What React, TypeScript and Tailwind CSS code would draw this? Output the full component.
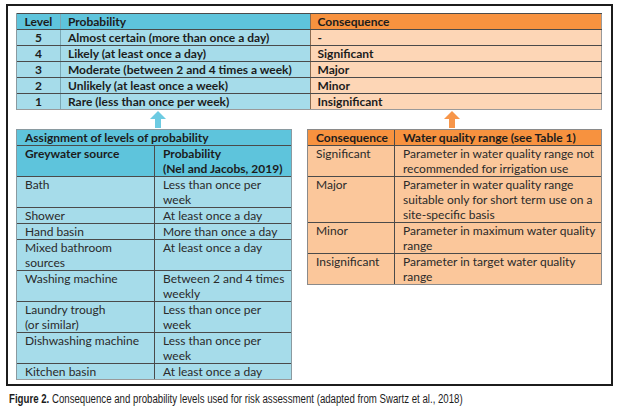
import React from 'react'

const topRows = [
  ['5', 'Almost certain (more than once a day)', '-'],
  ['4', 'Likely (at least once a day)', 'Significant'],
  ['3', 'Moderate (between 2 and 4 times a week)', 'Major'],
  ['2', 'Unlikely (at least once a week)', 'Minor'],
  ['1', 'Rare (less than once per week)', 'Insignificant'],
]

const sources: [string[], string[]][] = [
  [['Bath'], ['Less than once per', 'week']],
  [['Shower'], ['At least once a day']],
  [['Hand basin'], ['More than once a day']],
  [['Mixed bathroom', 'sources'], ['At least once a day']],
  [['Washing machine'], ['Between 2 and 4 times', 'weekly']],
  [['Laundry trough', '(or similar)'], ['Less than once per', 'week']],
  [['Dishwashing machine'], ['Less than once per', 'week']],
  [['Kitchen basin'], ['At least once a day']],
]

const consequences: [string, string[]][] = [
  ['Significant', ['Parameter in water quality range not', 'recommended for irrigation use']],
  ['Major', ['Parameter in water quality range', 'suitable only for short term use on a', 'site-specific basis']],
  ['Minor', ['Parameter in maximum water quality', 'range']],
  ['Insignificant', ['Parameter in target water quality', 'range']],
]

function Lines({ lines }: { lines: string[] }) {
  return (
    <>
      {lines.map((l, i) => (
        <div key={i} className="whitespace-nowrap">{l}</div>
      ))}
    </>
  )
}

function Arrow({ color }: { color: string }) {
  return (
    <svg width="16" height="17" viewBox="0 0 16 17">
      <polygon points="8,0 16,8 11,8 11,17 5,17 5,8 0,8" fill={color} />
    </svg>
  )
}

export default function App() {
  return (
    <div
      className="w-[617px] h-[408px] bg-white pt-[4px] pl-[6px] text-[12px] leading-[15px]"
      style={{ fontFamily: 'Lato, "Liberation Sans", sans-serif' }}
    >
      <div className="w-[607px] h-[382px] border-2 border-[#1c1c1c] pt-[7px] pl-[8px]">
        {/* top table */}
        <div className="w-[586px] font-bold text-[#1c1c1c] border-l border-[#8a9aa0]">
          <div className="flex border-b border-t border-[#4a4a4a]">
            <div className="w-[44px] text-center bg-[#5ec4dc] border-r border-[#7aa8b4]">Level</div>
            <div className="w-[249px] pl-[7px] bg-[#5ec4dc]">Probability</div>
            <div className="w-[293px] pl-[7px] bg-[#f7923f] border-l border-[#8a6a50] border-r border-r-[#999]">Consequence</div>
          </div>
          {topRows.map(([lvl, prob, cons], i) => (
            <div key={lvl} className={`flex border-b ${i === topRows.length - 1 ? 'border-[#9a9a9a]' : 'border-[#4a4a4a]'}`}>
              <div className="w-[44px] text-center bg-[#a6dcea] border-r border-[#7aa8b4]">{lvl}</div>
              <div className="w-[249px] pl-[7px] bg-[#a6dcea]">{prob}</div>
              <div className="w-[293px] pl-[7px] bg-[#fdd6b6] border-l border-[#8a6a50] border-r border-r-[#999]">{cons}</div>
            </div>
          ))}
        </div>

        {/* arrows */}
        <div className="flex h-[19px] pt-[1px]">
          <div className="ml-[134px]"><Arrow color="#6dcbe2" /></div>
          <div className="ml-[278px]"><Arrow color="#f7964a" /></div>
        </div>

        <div className="flex items-start gap-[15px]">
          {/* probability assignment */}
          <div className="w-[276px] border-l border-r border-[#8a9aa0] text-[#2a2a2a]">
            <div className="pl-[8px] bg-[#5ec4dc] font-bold text-[#1c1c1c] border-t border-[#8a9aa0] border-b border-b-[#4a4a4a]">
              Assignment of levels of probability
            </div>
            <div className="flex bg-[#5ec4dc] font-bold text-[#1c1c1c] border-b border-[#4a4a4a]">
              <div className="w-[138px] pl-[8px] border-r border-[#4a4a4a]">Greywater source</div>
              <div className="flex-1 pl-[8px]">
                <Lines lines={['Probability', '(Nel and Jacobs, 2019)']} />
              </div>
            </div>
            {sources.map(([src, prob], i) => (
              <div key={i} className={`flex bg-[#a6dcea] border-b ${i === sources.length - 1 ? 'border-[#9a9a9a]' : 'border-[#4a4a4a]'}`}>
                <div className="w-[138px] pl-[8px] border-r border-[#4a4a4a]"><Lines lines={src} /></div>
                <div className="flex-1 pl-[8px]"><Lines lines={prob} /></div>
              </div>
            ))}
          </div>

          {/* consequence ranges */}
          <div className="w-[295px] border-l border-r border-[#8a8a8a] text-[#2a2a2a]">
            <div className="flex bg-[#f7923f] font-bold text-[#1c1c1c] border-t border-[#8a8a8a] border-b border-b-[#4a4a4a]">
              <div className="w-[87px] pl-[8px] border-r border-[#4a4a4a]">Consequence</div>
              <div className="flex-1 pl-[8px]">Water quality range (see Table 1)</div>
            </div>
            {consequences.map(([c, lines], i) => (
              <div key={c} className={`flex bg-[#fbc79b] border-b ${i === consequences.length - 1 ? 'border-[#8a8a8a]' : 'border-[#4a4a4a]'}`}>
                <div className="w-[87px] pl-[8px] border-r border-[#4a4a4a]">{c}</div>
                <div className="flex-1 pl-[8px]"><Lines lines={lines} /></div>
              </div>
            ))}
          </div>
        </div>
      </div>

      <div className="mt-[5px] pl-[3px] text-[12px] text-[#1c1c1c] whitespace-nowrap">
        <div
          className="inline-block origin-left scale-x-[0.805]"
          style={{ fontFamily: '"Liberation Sans", Arial, sans-serif' }}
        >
          <span className="font-bold">Figure 2.</span> Consequence and probability levels used for risk assessment (adapted from Swartz et al., 2018)
        </div>
      </div>
    </div>
  )
}
